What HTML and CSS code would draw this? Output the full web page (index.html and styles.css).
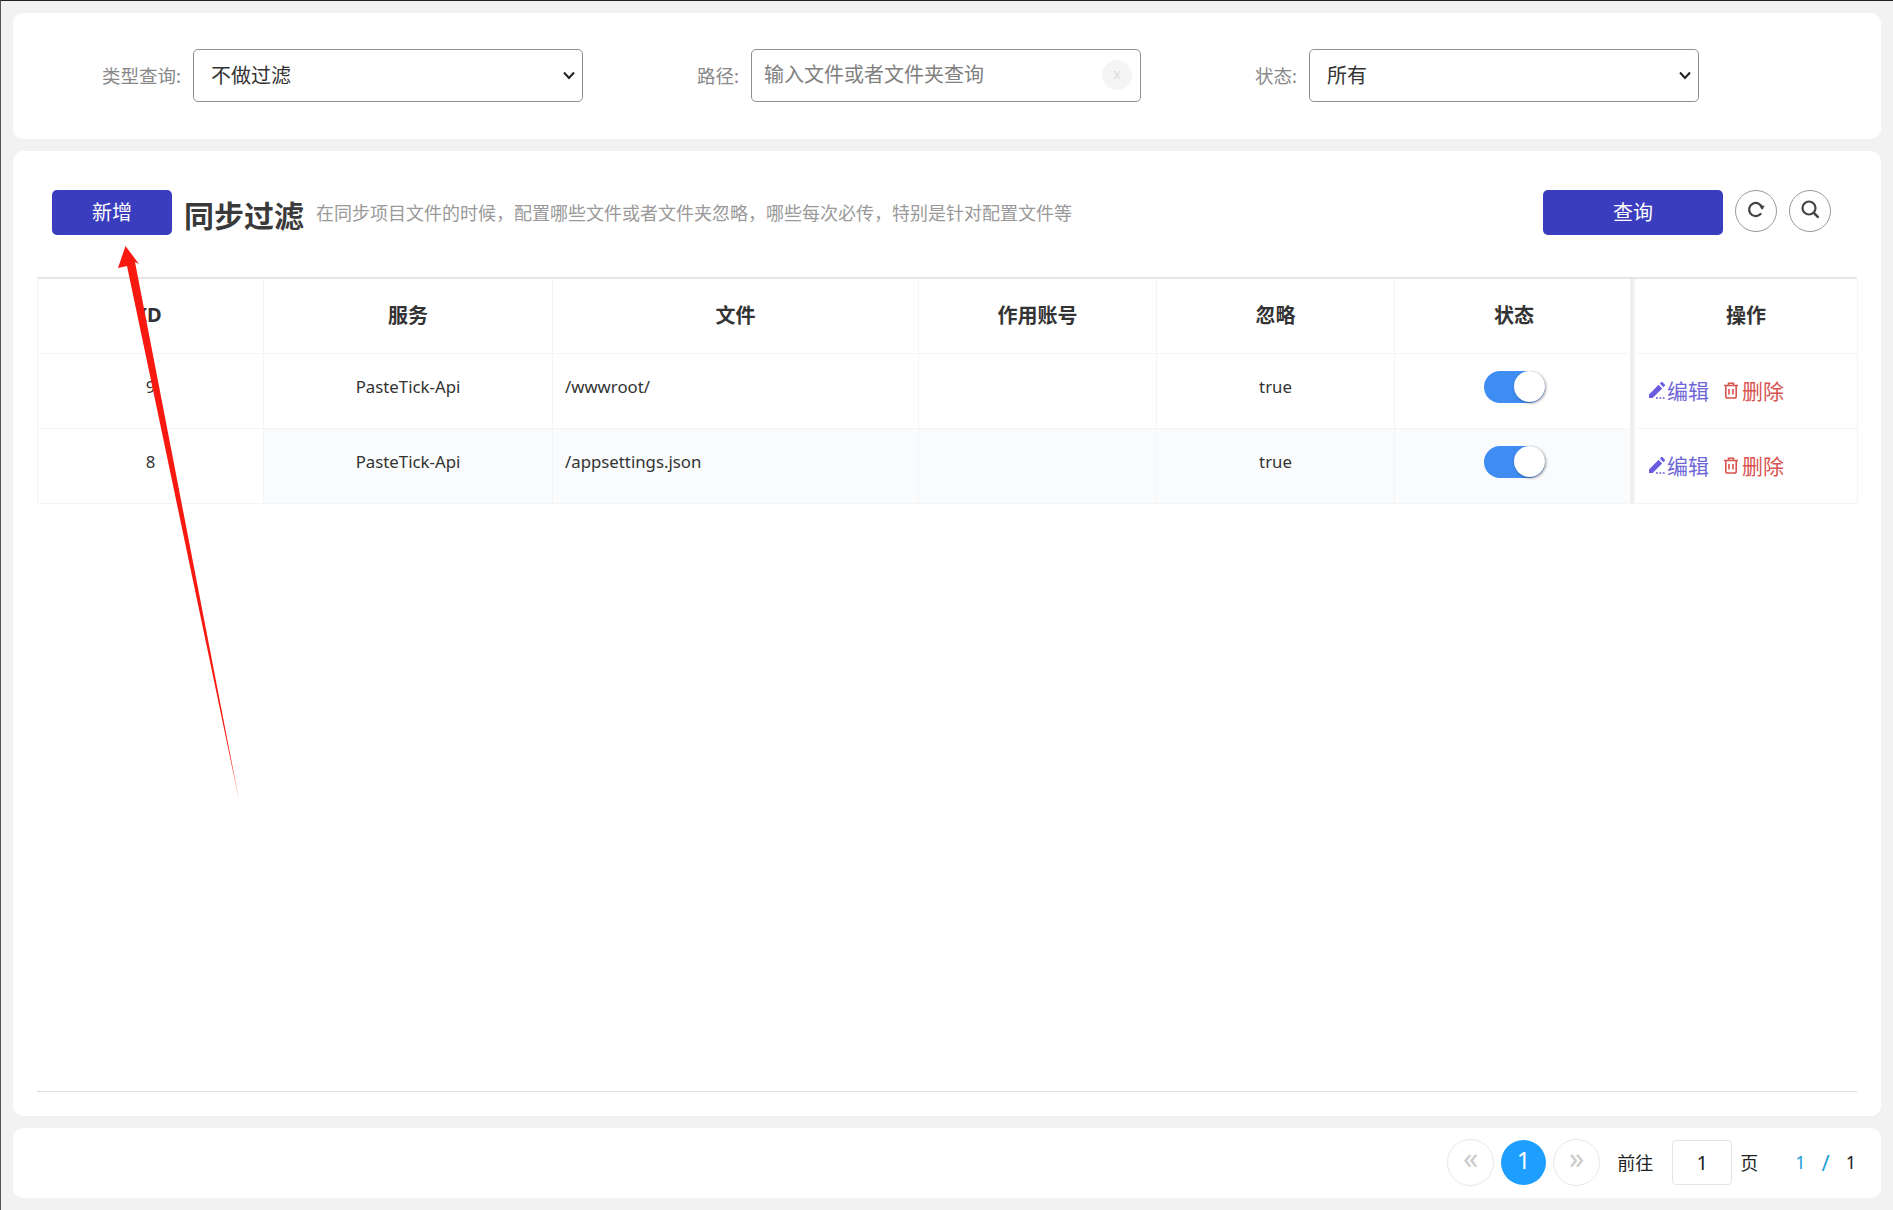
FILE: index.html
```html
<!DOCTYPE html>
<html lang="zh-CN">
<head>
    <meta charset="UTF-8">
    <title>同步过滤</title>
    <link rel="stylesheet" href="styles.css">
</head>
<body>
    <div class="card filter-bar">
        <div class="filter-item">
            <label>类型查询:</label>
            <select class="field"><option>不做过滤</option></select>
        </div>
        <div class="filter-item">
            <label>路径:</label>
            <div class="field search-field">
                <input type="text" placeholder="输入文件或者文件夹查询">
                <span class="clear-btn">x</span>
            </div>
        </div>
        <div class="filter-item">
            <label>状态:</label>
            <select class="field"><option>所有</option></select>
        </div>
    </div>

    <div class="card main">
        <div class="toolbar">
            <button class="btn btn-add">新增</button>
            <h1>同步过滤</h1>
            <span class="desc">在同步项目文件的时候，配置哪些文件或者文件夹忽略，哪些每次必传，特别是针对配置文件等</span>
            <div class="toolbar-right">
                <button class="btn btn-query">查询</button>
                <button class="circle-btn">
                    <svg width="20" height="20" viewBox="0 0 20 20" fill="none"><path d="M16.2 9.2A6.6 6.6 0 1 0 14.6 15" stroke="#444" stroke-width="2.2" stroke-linecap="round"/><path d="M13.2 6.8h5.6l-2.4 3.6z" fill="#444"/></svg>
                </button>
                <button class="circle-btn">
                    <svg width="20" height="20" viewBox="0 0 20 20" fill="none"><circle cx="9" cy="9" r="6.5" stroke="#444" stroke-width="2.2"/><path d="M13.8 13.8l4 4" stroke="#444" stroke-width="2.6" stroke-linecap="round"/></svg>
                </button>
            </div>
        </div>

        <div class="table-wrap">
            <table class="data-table">
                <colgroup>
                    <col class="col-id"><col class="col-service"><col class="col-file"><col class="col-account"><col class="col-ignore"><col class="col-status"><col class="col-action">
                </colgroup>
                <thead>
                    <tr>
                        <th class="fixed-left">ID</th>
                        <th>服务</th>
                        <th>文件</th>
                        <th>作用账号</th>
                        <th>忽略</th>
                        <th class="status-cell">状态</th>
                        <th class="fixed-right">操作</th>
                    </tr>
                </thead>
                <tbody>
                    <tr>
                        <td class="fixed-left">9</td>
                        <td>PasteTick-Api</td>
                        <td class="text-left">/wwwroot/</td>
                        <td></td>
                        <td>true</td>
                        <td class="status-cell"><span class="switch"><span class="knob"></span></span></td>
                        <td class="fixed-right">
                            <div class="actions">
                                <a class="link-edit"><svg width="18" height="18" viewBox="0 0 18 18"><path d="M1 17v-3.6L10.6 3.8l3.6 3.6L4.6 17zM11.8 2.6l1.4-1.4a1 1 0 0 1 1.4 0l2.2 2.2a1 1 0 0 1 0 1.4L15.4 6.2z" fill="#6a5ce0"/><path d="M8 16.2h1.8v1.6H8zM11.4 16.2h1.8v1.6h-1.8zM14.8 16.2h1.8v1.6h-1.8z" fill="#6a5ce0"/></svg>编辑</a>
                                <a class="link-del"><svg width="16" height="18" viewBox="0 0 16 18" fill="none"><path d="M1 4.5h14M5.5 4V2.2h5V4" stroke="#d9534f" stroke-width="1.6"/><path d="M2.8 4.8v10.4c0 1 .8 1.8 1.8 1.8h6.8c1 0 1.8-.8 1.8-1.8V4.8" stroke="#d9534f" stroke-width="1.6"/><path d="M6 8v5.5M10 8v5.5" stroke="#d9534f" stroke-width="1.6"/></svg>删除</a>
                            </div>
                        </td>
                    </tr>
                    <tr class="row-even">
                        <td class="fixed-left">8</td>
                        <td>PasteTick-Api</td>
                        <td class="text-left">/appsettings.json</td>
                        <td></td>
                        <td>true</td>
                        <td class="status-cell"><span class="switch"><span class="knob"></span></span></td>
                        <td class="fixed-right">
                            <div class="actions">
                                <a class="link-edit"><svg width="18" height="18" viewBox="0 0 18 18"><path d="M1 17v-3.6L10.6 3.8l3.6 3.6L4.6 17zM11.8 2.6l1.4-1.4a1 1 0 0 1 1.4 0l2.2 2.2a1 1 0 0 1 0 1.4L15.4 6.2z" fill="#6a5ce0"/><path d="M8 16.2h1.8v1.6H8zM11.4 16.2h1.8v1.6h-1.8zM14.8 16.2h1.8v1.6h-1.8z" fill="#6a5ce0"/></svg>编辑</a>
                                <a class="link-del"><svg width="16" height="18" viewBox="0 0 16 18" fill="none"><path d="M1 4.5h14M5.5 4V2.2h5V4" stroke="#d9534f" stroke-width="1.6"/><path d="M2.8 4.8v10.4c0 1 .8 1.8 1.8 1.8h6.8c1 0 1.8-.8 1.8-1.8V4.8" stroke="#d9534f" stroke-width="1.6"/><path d="M6 8v5.5M10 8v5.5" stroke="#d9534f" stroke-width="1.6"/></svg>删除</a>
                            </div>
                        </td>
                    </tr>
                </tbody>
            </table>
        </div>
    </div>

    <div class="card pager">
        <span class="page-btn page-arrow">«</span>
        <span class="page-btn page-current">1</span>
        <span class="page-btn page-arrow">»</span>
        <span class="goto-label">前往</span>
        <input class="goto-input" type="text" value="1">
        <span class="goto-unit">页</span>
        <span class="page-total"><em>1</em><em>/</em><b>1</b></span>
    </div>

    <!-- red annotation arrow drawn on top of the screenshot -->
    <svg class="annotation" width="1893" height="1210" viewBox="0 0 1893 1210">
        <polygon points="125.5,246 139,264 135,262 239,800 127,266 118,268" fill="#f81a10"/>
    </svg>
</body>
</html>
```

FILE: styles.css
```css
* {
    box-sizing: border-box;
}
body {
    margin: 0;
    width: 1893px;
    height: 1210px;
    padding: 12px 12px 12px 12px;
    display: flex;
    flex-direction: column;
    gap: 12px;
    overflow: hidden;
    position: relative;
    background-color: #f2f2f2;
    border-top: 1px solid #222;
    border-left: 1px solid #555;
    font-family: "Noto Sans", "Noto Sans CJK SC", sans-serif;
    font-size: 18px;
    color: #333;
}
.card {
    background: white;
    border-radius: 10px;
}

/* top filters */
.filter-bar {
    height: 126px;
    display: flex;
    align-items: center;
    padding: 0 0 2px 13px;
}
.filter-item {
    width: 558px;
    display: flex;
    align-items: center;
    gap: 12px;
}
.filter-item label {
    width: 155px;
    text-align: right;
    color: #888;
    font-size: 18.5px;
}
.field {
    width: 390px;
    height: 53px;
    border: 1px solid #8f8f8f;
    border-radius: 5px;
    background: white;
    font-family: inherit;
    font-size: 20px;
    color: #333;
}
select.field {
    padding-left: 17px;
    appearance: none;
    background: white url("data:image/svg+xml,%3Csvg xmlns='http://www.w3.org/2000/svg' width='14' height='14'%3E%3Cpath d='M2 4.5l5 5.5 5-5.5' fill='none' stroke='%23222' stroke-width='2'/%3E%3C/svg%3E") no-repeat right 6px center;
}
.search-field {
    display: flex;
    align-items: center;
    padding: 0 4px 0 12px;
}
.search-field input {
    flex: 1;
    min-width: 0;
    padding: 0 0 2px 0;
    border: none;
    outline: none;
    font-family: inherit;
    font-size: 20px;
    color: #333;
}
.search-field input::placeholder {
    color: #808080;
}
.clear-btn {
    width: 30px;
    height: 30px;
    margin-right: 4px;
    border-radius: 50%;
    background: #f5f5f5;
    color: #ddd;
    font-size: 14px;
    line-height: 28px;
    text-align: center;
}

/* main card */
.main {
    flex: 1;
    display: flex;
    flex-direction: column;
    padding: 39px 24px 24px 24px;
}
.toolbar {
    height: 45px;
    margin-bottom: 42px;
    padding: 0 26px 0 15px;
    display: flex;
    align-items: center;
}
.btn {
    height: 45px;
    padding: 0 0 2px 0;
    border: none;
    border-radius: 5px;
    background-color: #3a3dbd;
    color: white;
    font-family: inherit;
    font-size: 20px;
}
.btn-add {
    width: 120px;
}
.btn-query {
    width: 180px;
}
.toolbar h1 {
    margin: 2px 0 0 12px;
    font-size: 30px;
    font-weight: 700;
    color: #3a3a3a;
}
.desc {
    margin: 0 0 2px 12px;
    color: #999;
    font-size: 18px;
}
.toolbar-right {
    margin-left: auto;
    display: flex;
    align-items: flex-start;
    gap: 12px;
    height: 45px;
}
.circle-btn {
    width: 42px;
    height: 42px;
    padding: 0 0 4px 0;
    border: 1px solid #999;
    border-radius: 50%;
    background: white;
    display: flex;
    align-items: center;
    justify-content: center;
}

/* table */
.table-wrap {
    flex: 1;
    border-top: 2px solid #e5e5e5;
    border-bottom: 1px solid #ddd;
}
.data-table {
    width: 1820px;
    table-layout: fixed;
    border-collapse: collapse;
}
.col-id { width: 226px; }
.col-service { width: 289px; }
.col-file { width: 366px; }
.col-account { width: 238px; }
.col-ignore { width: 238px; }
.col-status { width: 236px; }
.col-action { width: 227px; }
.data-table th, .data-table td {
    height: 75px;
    padding: 0 12px;
    border: 1px solid #f4f4f4;
    text-align: center;
    font-weight: 400;
}
.data-table th {
    height: 74px;
    padding-bottom: 2px;
    border-top: none;
    font-size: 20px;
    font-weight: 700;
    color: #333;
}
.data-table td {
    padding-bottom: 8px;
    font-size: 16.8px;
}
.data-table .text-left {
    text-align: left;
}
.data-table .status-cell {
    padding-left: 15px;
}
.row-even td {
    background-color: #f9fbfc;
}
.row-even .fixed-left, .row-even .fixed-right {
    background-color: white;
}
.fixed-left {
    position: relative;
    z-index: 1;
    box-shadow: 3px 0 3px -1px #e8e8e8;
}
.fixed-right {
    box-shadow: inset 5px 0 3px -2px #ebebeb;
}
.data-table th.fixed-right {
    padding-left: 16px;
}
.switch {
    display: inline-block;
    position: relative;
    width: 61px;
    height: 32px;
    border-radius: 16px;
    background-color: #3f8cf3;
    vertical-align: middle;
}
.knob {
    position: absolute;
    top: 0;
    right: 0;
    width: 31px;
    height: 31px;
    border-radius: 50%;
    background: white;
    box-shadow: 1px 1px 3px rgba(0,0,0,0.4);
}
.actions {
    display: flex;
    gap: 14px;
    margin-top: 6px;
    padding-left: 5px;
    font-size: 21px;
}
.actions a {
    display: flex;
    align-items: center;
    gap: 1px;
}
.link-edit {
    color: #6f66d8;
}
.actions .link-del {
    color: #d9534f;
    gap: 3px;
}

/* pager */
.pager {
    height: 70px;
    display: flex;
    align-items: center;
    justify-content: flex-end;
    padding: 0 25px 2px 0;
}
.page-btn {
    width: 47px;
    height: 47px;
    border-radius: 50%;
    display: flex;
    align-items: center;
    justify-content: center;
}
.page-arrow {
    border: 1px solid #e8e8e8;
    color: #ccc;
    font-size: 30px;
    padding-bottom: 10px;
}
.page-current {
    width: 45px;
    height: 45px;
    margin: 0 7px;
    background-color: #1e9fff;
    color: white;
    font-size: 24px;
    padding-bottom: 6px;
}
.goto-label {
    margin-left: 17px;
    color: #222;
}
.goto-input {
    width: 60px;
    height: 45px;
    margin: 0 8px 0 19px;
    border: 1px solid #e5e5e5;
    border-radius: 4px;
    text-align: center;
    font-family: inherit;
    font-size: 20px;
    color: #222;
}
.goto-unit {
    color: #222;
}
.page-total {
    margin-left: 37px;
    display: flex;
    align-items: center;
    gap: 16px;
}
.page-total em {
    font-style: normal;
    color: #1e9fd8;
}
.page-total em + em {
    font-size: 22px;
}
.page-total b {
    font-weight: 400;
    color: #222;
}

.annotation {
    position: absolute;
    top: -1px;
    left: -1px;
    z-index: 2;
    pointer-events: none;
}
```
